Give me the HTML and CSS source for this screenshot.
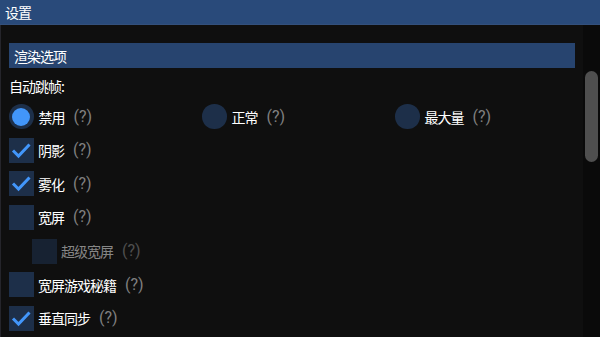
FILE: index.html
```html
<!DOCTYPE html>
<html lang="zh">
<head>
<meta charset="utf-8">
<link rel="stylesheet" href="styles.css">
</head>
<body>
<div class="window">
  <div class="titlebar"><span class="cjk">设置</span></div>
  <div class="main">
    <div class="content">
      <div class="header"><span class="cjk">渲染选项</span></div>
      <div class="label"><span class="cjk">自动跳帧:</span></div>
      <div class="radios">
        <div class="item">
          <span class="radio on"><span class="dot"></span></span>
          <span class="cjk txt">禁用</span><span class="help">(?)</span>
        </div>
        <div class="item">
          <span class="radio"></span>
          <span class="cjk txt">正常</span><span class="help">(?)</span>
        </div>
        <div class="item">
          <span class="radio"></span>
          <span class="cjk txt">最大量</span><span class="help">(?)</span>
        </div>
      </div>
      <div class="item">
        <span class="box"><svg viewBox="0 0 25 25"><polyline points="4,12.5 9.5,18 20.5,6.5"/></svg></span>
        <span class="cjk txt">阴影</span><span class="help">(?)</span>
      </div>
      <div class="item">
        <span class="box"><svg viewBox="0 0 25 25"><polyline points="4,12.5 9.5,18 20.5,6.5"/></svg></span>
        <span class="cjk txt">雾化</span><span class="help">(?)</span>
      </div>
      <div class="item">
        <span class="box"></span>
        <span class="cjk txt">宽屏</span><span class="help">(?)</span>
      </div>
      <div class="item indent disabled">
        <span class="box"></span>
        <span class="cjk txt">超级宽屏</span><span class="help">(?)</span>
      </div>
      <div class="item">
        <span class="box"></span>
        <span class="cjk txt">宽屏游戏秘籍</span><span class="help">(?)</span>
      </div>
      <div class="item">
        <span class="box"><svg viewBox="0 0 25 25"><polyline points="4,12.5 9.5,18 20.5,6.5"/></svg></span>
        <span class="cjk txt">垂直同步</span><span class="help">(?)</span>
      </div>
    </div>
    <div class="scrollbar"><div class="grab"></div></div>
  </div>
</div>
</body>
</html>
```
FILE: styles.css
```css
html, body {
  margin: 0;
  padding: 0;
  background: #0f0f0f;
}
.window {
  width: 600px;
  height: 337px;
  overflow: hidden;
  background: #0f0f0f;
  color: #ffffff;
  display: flex;
  flex-direction: column;
}
.cjk {
  font-family: "Noto Sans CJK SC", "Noto Sans", sans-serif;
  font-size: 14px;
  letter-spacing: -1px;
  line-height: 1;
}
.titlebar {
  height: 25px;
  flex: none;
  box-sizing: border-box;
  background: #294a7a;
  border-bottom: 1px solid #33507c;
  display: flex;
  align-items: center;
  padding-left: 5px;
}
.main {
  flex: 1;
  display: flex;
  border-left: 1px solid #25252b;
  min-height: 0;
}
.content {
  flex: 1;
  padding: 18px 8px 0 8px;
  display: flex;
  flex-direction: column;
  gap: 8.6px;
}
.header {
  height: 25px;
  flex: none;
  background: #27446f;
  display: flex;
  align-items: center;
  padding-left: 5px;
}
.label {
  height: 19px;
  flex: none;
  display: flex;
  align-items: center;
}
.radios {
  display: grid;
  grid-template-columns: 193px 193px auto;
}
.item {
  height: 25px;
  flex: none;
  display: flex;
  align-items: center;
}
.radio {
  width: 24.5px;
  height: 24.5px;
  border-radius: 50%;
  background: #1d2f49;
  flex: none;
  display: flex;
  align-items: center;
  justify-content: center;
  margin-right: 5px;
}
.radio .dot {
  width: 18px;
  height: 18px;
  border-radius: 50%;
  background: #4296fa;
}
.box {
  width: 25px;
  height: 25px;
  background: #1d2f49;
  flex: none;
  margin-right: 4px;
  display: flex;
}
.box svg {
  width: 25px;
  height: 25px;
}
.box polyline {
  fill: none;
  stroke: #4296fa;
  stroke-width: 3;
  stroke-linecap: butt;
  stroke-linejoin: miter;
}
.txt {
  margin-right: 9px;
}
.help {
  font-family: Roboto, "Liberation Sans", sans-serif;
  font-size: 16px;
  color: #808080;
  line-height: 1;
}
.indent {
  padding-left: 23px;
}
.disabled .box {
  background: #172232;
}
.disabled .txt {
  color: #868686;
}
.disabled .help {
  color: #4f4f4f;
}
.scrollbar {
  width: 17px;
  flex: none;
  background: #0a0a0a;
  padding-top: 46px;
  box-sizing: border-box;
}
.grab {
  margin-left: 2px;
  width: 13px;
  height: 91px;
  border-radius: 6.5px;
  background: #4f4f4f;
}
```
